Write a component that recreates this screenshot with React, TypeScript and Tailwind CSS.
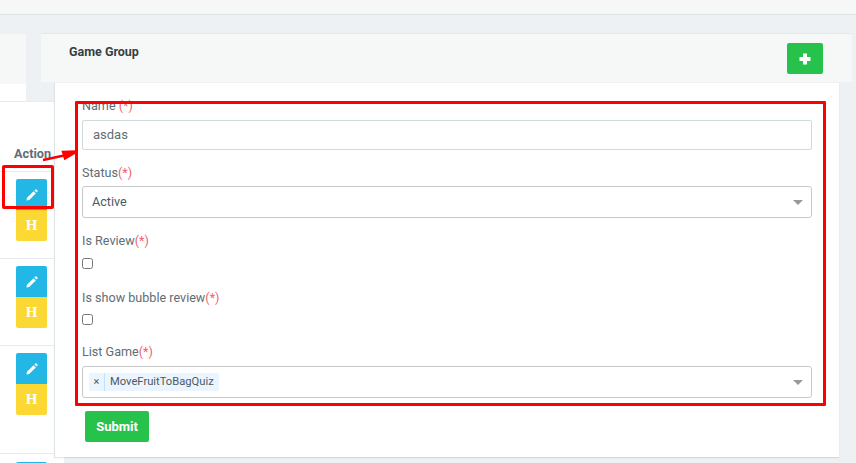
import React from "react";

const Req = () => <span className="text-[#f0616d]">(*)</span>;

function Pencil() {
  return (
    <svg width="12" height="12" viewBox="0 0 12 12" fill="#fff">
      <path d="M0.5 11.5 L1 8.8 L7.6 2.2 L9.8 4.4 L3.2 11 Z" />
      <path d="M8.4 1.4 L9.4 0.5 Q10 0.1 10.5 0.5 L11.5 1.5 Q11.9 2 11.5 2.6 L10.6 3.6 Z" />
    </svg>
  );
}

function ActionButtons() {
  return (
    <>
      <div className="w-[31px] h-[31px] rounded-t-[2px] bg-[#23b7e5] flex items-center justify-center">
        <Pencil />
      </div>
      <div className="w-[31px] h-[31px] rounded-b-[2px] bg-[#fcd835] flex items-center justify-center text-white font-bold text-[15px] font-['Liberation_Serif',serif]">
        H
      </div>
    </>
  );
}

function Caret() {
  return <span className="w-0 h-0 border-x-[5px] border-x-transparent border-t-[5px] border-t-[#999]" />;
}

export default function App() {
  return (
    <div className="relative w-[856px] h-[463px] overflow-hidden bg-[#eef1f3] font-['Roboto',sans-serif] text-[12.6px] text-[#5f6d75]">
      <div className="h-[15px] bg-[#f6f8f8] border-b border-[#dee5e7]" />
      <div className="flex pt-[18px]">
        {/* left list card */}
        <div className="w-[64px] shrink-0">
          <div className="h-[68px] flex border-t border-transparent">
            <div className="w-[26px] flex flex-col">
              <div className="h-[50px] bg-[#f6f8f8]" />
              <div className="flex-1 bg-white" />
            </div>
          </div>
          <div className="h-[362px] bg-white border-t border-[#e7ecef]">
            <div className="h-[69px] flex items-end pl-[14px] font-bold text-[#5f6d75] text-[12.7px] leading-[18px] pb-[8px]">Action</div>
            <div className="border-t border-[#e7ecef]">
              <div className="h-[87px] pt-[7px] pl-[16px] border-b border-[#e7ecef]">
                <ActionButtons />
              </div>
              <div className="h-[87px] pt-[7px] pl-[16px] border-b border-[#e7ecef]">
                <ActionButtons />
              </div>
              <div className="h-[108px] pt-[7px] pl-[16px] border-b border-[#e7ecef]">
                <ActionButtons />
              </div>
              <div className="pl-[16px] pt-[8px]">
                <div className="w-[31px] h-[31px] rounded-t-[2px] bg-[#23b7e5]" />
              </div>
            </div>
          </div>
        </div>
        {/* form card */}
        <div className="relative -ml-[10px] w-[785px] h-[424px] bg-white border-l border-[#dee5e7] shadow-[0_1px_1px_rgba(0,0,0,0.1)]">
          <div className="relative -ml-[14px] w-[811px] h-[50px] bg-[#f6f8f8] border-t border-t-[#e4e9eb] border-b border-b-[#edf1f2] flex justify-between">
            <div className="pl-[28px] pt-[9px] font-bold text-[12.5px] leading-[17px] text-[#363f44]">Game Group</div>
            <div className="mr-[29px] mt-[9px] w-[36px] h-[31px] rounded-[2px] bg-[#27c24c] flex items-center justify-center">
              <svg width="12" height="12" viewBox="0 0 12 12" fill="#fff">
                <path d="M4 0.5 H8 V4 H11.5 V8 H8 V11.5 H4 V8 H0.5 V4 H4 Z" />
              </svg>
            </div>
          </div>
          <div className="pl-[27px] w-[757px]">
            <div className="pt-[14px] h-[37px] leading-[18px]">Name <Req /></div>
            <div className="h-[30px] border border-[#cfdadd] rounded-[2px] px-[10px] flex items-center text-[13px]">asdas</div>
            <div className="mt-[14px] leading-[18px]">Status<Req /></div>
            <div className="mt-[4px] h-[32px] border border-[#c8c8c8] rounded-[3px] pl-[9px] pr-[8px] flex items-center justify-between text-[#4d5a62]">
              <span>Active</span>
              <Caret />
            </div>
            <div className="mt-[14px] leading-[18px]">Is Review<Req /></div>
            <input type="checkbox" className="block mt-[8px] w-[11px] h-[11px] appearance-auto m-0" />
            <div className="mt-[20px] leading-[18px]">Is show bubble review<Req /></div>
            <input type="checkbox" className="block mt-[7px] w-[11px] h-[11px] appearance-auto m-0" />
            <div className="mt-[18px] leading-[18px]">List Game<Req /></div>
            <div className="mt-[5px] h-[32px] border border-[#c8c8c8] rounded-[3px] pl-[6px] pr-[8px] flex items-center justify-between">
              <div className="h-[18px] flex items-center bg-[#ebf5ff] rounded-[2px] text-[11.2px] text-[#4d5a62]">
                <span className="w-[16px] h-full flex items-center justify-center border-r border-[#c2e0ff] text-[11px]">×</span>
                <span className="px-[5px]">MoveFruitToBagQuiz</span>
              </div>
              <Caret />
            </div>
            <div className="mt-[13px] ml-[3px] w-[64px] h-[31px] rounded-[2px] bg-[#27c24c] text-white font-bold text-[13px] flex items-center justify-center">Submit</div>
          </div>
        </div>
      </div>

      {/* annotation overlay */}
      <div className="absolute left-[75px] top-[101px] w-[751px] h-[305px] border-[3px] border-[#ff0000] rounded-[1px]" />
      <div className="absolute left-[2px] top-[165px] w-[52px] h-[44px] border-[3px] border-[#ff0000] rounded-[2px]" />
      <svg className="absolute left-[42px] top-[150px]" width="36" height="12" viewBox="0 0 36 12">
        <path d="M1 10 L22 5.5 M35 1.5 L21 2 L23 8.5 Z" stroke="#ff0000" strokeWidth="2.4" fill="#ff0000" />
      </svg>
    </div>
  );
}
